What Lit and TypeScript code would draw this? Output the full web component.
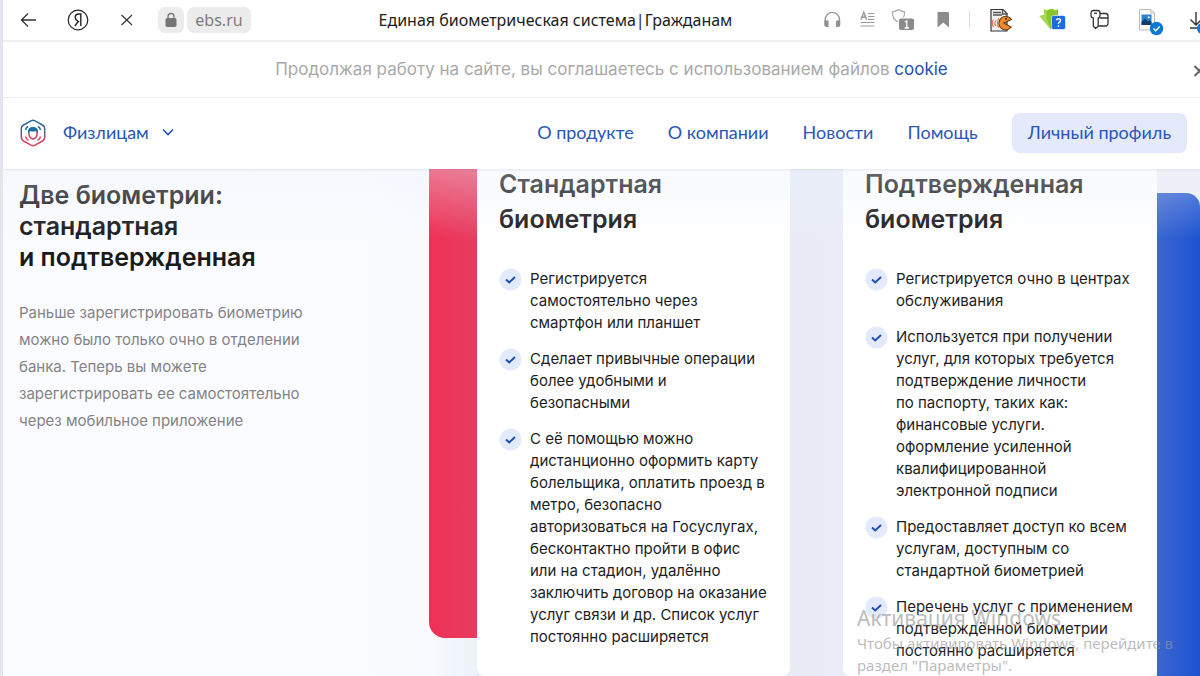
import { LitElement, html, css, nothing } from "lit";
import { customElement, property } from "lit/decorators.js";

const standardItems: string[][] = [
  ["Регистрируется", "самостоятельно через", "смартфон или планшет"],
  ["Сделает привычные операции", "более удобными и", "безопасными"],
  [
    "С её помощью можно",
    "дистанционно оформить карту",
    "болельщика, оплатить проезд в",
    "метро, безопасно",
    "авторизоваться на Госуслугах,",
    "бесконтактно пройти в офис",
    "или на стадион, удалённо",
    "заключить договор на оказание",
    "услуг связи и др. Список услуг",
    "постоянно расширяется",
  ],
];

const confirmedItems: string[][] = [
  ["Регистрируется очно в центрах", "обслуживания"],
  [
    "Используется при получении",
    "услуг, для которых требуется",
    "подтверждение личности",
    "по паспорту, таких как:",
    "финансовые услуги.",
    "оформление усиленной",
    "квалифицированной",
    "электронной подписи",
  ],
  ["Предоставляет доступ ко всем", "услугам, доступным со", "стандартной биометрией"],
  ["Перечень услуг с применением", "подтверждённой биометрии", "постоянно расширяется"],
];

const lines = (rows: string[]) => rows.map((row, i) => html`${i ? html`<br />` : nothing}${row}`);

@customElement("browser-bar")
class BrowserBar extends LitElement {
  static styles = css`
    :host {
      display: flex;
      align-items: center;
      height: 42px;
      box-sizing: border-box;
      border-bottom: 2px solid #f0f0f0;
      background: #fff;
      font-family: "Noto Sans", "Open Sans", sans-serif;
    }
    button {
      border: 0;
      padding: 0;
      margin: 0;
      background: none;
      font: inherit;
      display: flex;
    }
    svg {
      display: block;
    }
    .group {
      display: flex;
      align-items: center;
      flex: none;
    }
    .address {
      display: flex;
      gap: 3px;
      margin-left: 3px;
    }
    .chip {
      height: 26px;
      border-radius: 7px;
      background: #ececec;
      align-items: center;
      justify-content: center;
    }
    .lock {
      width: 26px;
    }
    .host {
      width: 64px;
      font-size: 16px;
      color: #7c7c7c;
    }
    .title {
      flex: 1;
      min-width: 0;
      padding-left: 46px;
      text-align: center;
      white-space: nowrap;
      overflow: hidden;
      font-size: 16px;
      line-height: 24px;
      color: #1c1c1c;
    }
  `;

  render() {
    return html`
      <div class="group">
        <button aria-label="Назад">
          <svg width="51" height="40" viewBox="0 0 51 40" fill="none" stroke="#333" stroke-width="1.300">
            <path d="M33 20H18.500M25 13.500L18.500 20l6.500 6.500" />
          </svg>
        </button>
        <button aria-label="Яндекс">
          <svg width="49" height="40" viewBox="0 0 49 40" fill="none" stroke="#222">
            <circle cx="24" cy="20" r="9.800" stroke-width="1.200" />
            <path d="M26.800 26V14h-2c-2.300 0-3.600 1.300-3.600 3.200 0 1.800.9 2.700 2.500 3.800l1.500 1M24.200 21.300L20.900 26" stroke-width="1.400" />
          </svg>
        </button>
        <button aria-label="Остановить">
          <svg width="52" height="40" viewBox="0 0 52 40" fill="none" stroke="#333" stroke-width="1.200">
            <path d="M18.500 15l10.500 10M29 15L18.500 25" />
          </svg>
        </button>
        <div class="address">
          <button class="chip lock" aria-label="Защищённое соединение">
            <svg width="14" height="16" viewBox="0 0 14 16">
              <path d="M4 7V4.500a3 3 0 0 1 6 0V7" fill="none" stroke="#7a7a7a" stroke-width="1.300" />
              <rect x="1.500" y="6" width="11" height="9" rx="1.800" fill="#757575" />
            </svg>
          </button>
          <button class="chip host">ebs.ru</button>
        </div>
      </div>
      <div class="title">Единая биометрическая система|Гражданам</div>
      <div class="group">
        <button aria-label="Слушать">
          <svg width="36" height="40" viewBox="0 0 36 40">
            <path d="M11.200 22v-2.500a7.100 7.100 0 0 1 14.200 0V22" fill="none" stroke="#999" stroke-width="1.300" />
            <path d="M10.300 20.500h4.200v6.500h-1.700a2.500 2.500 0 0 1-2.500-2.500zM22.100 20.500h4.200v4a2.500 2.500 0 0 1-2.500 2.500h-1.700z" fill="#8f8f8f" />
          </svg>
        </button>
        <button aria-label="Режим чтения">
          <svg width="36" height="40" viewBox="0 0 36 40" fill="none" stroke="#999">
            <path d="M11 19.500l2.800-7 2.800 7M12 17.300h3.600" stroke-width="1.500" />
            <path d="M18 13.500h6.500M18 16.500h6.500M18 19.500h6.500M10.500 22.500h14M10.500 26h14" stroke-width="1.200" />
          </svg>
        </button>
        <button aria-label="Защита: 1">
          <svg width="36" height="40" viewBox="0 0 36 40">
            <path d="M12.500 9.500c2 1.700 4 2 6 2.300.3 4-.8 8.200-6 10.500-5.200-2.300-6.300-6.500-6-10.500 2-.3 4-.6 6-2.300z" fill="#fff" stroke="#aaa" stroke-width="1.200" />
            <rect x="12.500" y="18" width="16" height="12.500" rx="2.500" fill="#8a8a8a" stroke="#fff" />
            <path d="M18.800 22l2-1.200V28M18.600 28h4.400" fill="none" stroke="#fff" stroke-width="1.300" />
          </svg>
        </button>
        <button aria-label="Закладка">
          <svg width="36" height="40" viewBox="0 0 36 40">
            <path d="M15.500 12h10.500a1 1 0 0 1 1 1v14.500l-5.700-5-5.800 5z" fill="#8c8c8c" />
          </svg>
        </button>
        <svg width="20" height="40" viewBox="0 0 20 40"><path d="M11.500 11v17" stroke="#ddd" /></svg>
        <button aria-label="Расширение озвучивания">
          <svg width="49" height="40" viewBox="0 0 49 40">
            <path d="M13 9.500h12l4 4V31H13z" fill="#f3f3f3" stroke="#333" stroke-width="1.200" />
            <path d="M15 12.500h8M15 15h9M24.500 10v4h5" stroke="#555" stroke-width="1.400" fill="none" />
            <path d="M15.500 19.500c-1.500 2-1.500 5 0 7.500M18 20.500c-1.200 1.500-1.200 4 0 5.500M21 18c-2 2.500-2 7 0 10" stroke="#f0704c" stroke-width="1.200" fill="none" />
            <path d="M33.200 19a6.800 6.800 0 1 0 .6 7.500l-7.800-3.300z" fill="#ef8a2b" stroke="#5c3514" stroke-width="1" transform="rotate(6 28 22)" />
            <circle cx="28" cy="18.800" r="1" fill="#3a2414" />
          </svg>
        </button>
        <button aria-label="Расширение загрузки">
          <svg width="49" height="40" viewBox="0 0 49 40">
            <path d="M17 9l3.500 1.500 2-1.500h4l1.500 1.500L31 9v7h4L24 29.500 12.500 16l5-1z" fill="#8ac52c" />
            <path d="M17 9l2.500 1.500v8L24 29.500 12.500 16l5-1z" fill="#a8d85a" />
            <rect x="24.500" y="15.500" width="14" height="14" rx="2" fill="#1d6be0" stroke="#fff" stroke-width=".6" />
            <path d="M29.500 20.300c.2-2 4-2 4 .2 0 1.600-2 1.500-2 3.300M31.500 25.300v1.600" fill="none" stroke="#fff" stroke-width="1.500" />
          </svg>
        </button>
        <button aria-label="Пароли">
          <svg width="49" height="40" viewBox="0 0 49 40" fill="none" stroke="#333" stroke-width="1.300">
            <path d="M17 10.500h4.500a2.500 2.500 0 0 1 2.500 2.500v2.500a2.500 2.500 0 0 1-1.800 2.400v8.300l-2.600 2.300-2.300-2.300v-8.300a2.500 2.500 0 0 1-2.300-2.400V13a2.500 2.500 0 0 1 2-2.500z" stroke-linejoin="round" />
            <path d="M18 13.200h3" />
            <path d="M24 13.500h5.500a2.500 2.500 0 0 1 2.500 2.500v7.500a2.500 2.500 0 0 1-2.500 2.500h-7M23.500 18H32" />
          </svg>
        </button>
        <button aria-label="Изображения">
          <svg width="49" height="40" viewBox="0 0 49 40">
            <path d="M14.500 9.500H26l3.500 3.500v17h-15z" fill="#fbfbfb" stroke="#bbb" />
            <path d="M26 9.500V13h3.500" fill="none" stroke="#bbb" />
            <rect x="16.500" y="14.500" width="10" height="10.500" fill="#2d83c9" />
            <path d="M16.500 25v-3l3.500-3.500 3 3 1.500-1.500 2 2V25z" fill="#123c6b" />
            <circle cx="23.800" cy="17.300" r="1" fill="#fff" />
            <circle cx="31.500" cy="28.500" r="6.700" fill="#0b78d4" />
            <path d="M28.500 28.500l2.200 2.200 4-4.200" stroke="#fff" stroke-width="1.500" fill="none" />
          </svg>
        </button>
        <button aria-label="Загрузки">
          <svg width="26" height="40" viewBox="0 0 26 40">
            <path d="M22 12v13M16.500 19.500l5.500 5.500 5.500-5.500M16 28H26" fill="none" stroke="#333" stroke-width="1.400" />
            <circle cx="28.500" cy="28.500" r="5.500" fill="#0b78d4" />
          </svg>
        </button>
      </div>
    `;
  }
}

@customElement("cookie-notice")
class CookieNotice extends LitElement {
  static styles = css`
    :host {
      display: flex;
      height: 56px;
      box-sizing: border-box;
      padding: 0 0 2px 28px;
      align-items: center;
      border-bottom: 1px solid #eeeef2;
      background: #fff;
      font-family: Inter, "Open Sans", sans-serif;
      font-size: 17px;
      line-height: 24px;
      color: #a9a9a9;
    }
    p {
      flex: 1;
      margin: 0;
      text-align: center;
      white-space: nowrap;
    }
    a {
      color: #2450b0;
      text-decoration: none;
    }
    button {
      flex: none;
      border: 0;
      padding: 4px 0 0;
      background: none;
    }
    svg {
      display: block;
    }
  `;
  render() {
    return html`
      <p>Продолжая работу на сайте, вы соглашаетесь с использованием файлов <a href="#cookie">cookie</a></p>
      <button aria-label="Закрыть">
        <svg width="8" height="14" viewBox="0 0 8 14" fill="none" stroke="#666" stroke-width="2">
          <path d="M2.500 2l5 5-5 5M7 7l5-5M7 7l5 5" />
        </svg>
      </button>
    `;
  }
}

@customElement("site-header")
class SiteHeader extends LitElement {
  static styles = css`
    :host {
      display: flex;
      align-items: center;
      justify-content: space-between;
      height: 71px;
      box-sizing: border-box;
      padding: 0 13px 2px 17px;
      background: #fff;
      box-shadow: 0 1px 2px rgba(60, 80, 150, 0.1);
      font-family: Lato, "Open Sans", sans-serif;
      font-size: 18px;
      line-height: 22px;
    }
    .brand,
    nav {
      display: flex;
      align-items: center;
    }
    .brand {
      gap: 17px;
    }
    nav {
      gap: 34px;
    }
    a {
      color: #2a56b8;
      text-decoration: none;
      white-space: nowrap;
    }
    nav a {
      padding-bottom: 2px;
    }
    button {
      display: flex;
      align-items: center;
      gap: 13px;
      border: 0;
      padding: 0 0 2px;
      background: none;
      font: inherit;
      color: #2a56b8;
      white-space: nowrap;
    }
    .profile {
      padding: 8px 16px 10px;
      border-radius: 8px;
      background: #e4eafc;
    }
    svg {
      display: block;
    }
  `;
  render() {
    return html`
      <div class="brand">
        <a href="#home" aria-label="Единая биометрическая система">
          <svg width="26" height="28" viewBox="0 0 26 28" fill="none">
            <defs>
              <linearGradient id="edge" x1="0" y1="0" x2="0" y2="1">
                <stop offset="0" stop-color="#1d6f9f" />
                <stop offset=".5" stop-color="#5b5a86" />
                <stop offset=".75" stop-color="#d6405c" />
                <stop offset="1" stop-color="#d6405c" />
              </linearGradient>
            </defs>
            <path d="M11 1.800Q13 .8 15 1.800L22.500 6Q24.700 7.300 24.700 9.500v9q0 2.200-2.200 3.500L15 26.200q-2 1-4 0L3.500 22Q1.300 20.700 1.300 18.500v-9Q1.300 7.300 3.500 6z" stroke="url(#edge)" stroke-width="1.500" />
            <path d="M9 12v3.500c0 2.300 2 4.500 4 4.500s4-2.200 4-4.500V12" stroke="#c9405f" stroke-width="1.500" />
            <path d="M8 14.500c-.6-4.500 1.500-6.500 5-6.500s5.600 2 5 6.500l-1.700-2.500c-2 .7-4.600.7-6.600 0z" fill="#1c6ea3" />
            <path d="M5.500 11q.5-2.500 2.500-3.500M20.500 11q-.5-2.500-2.500-3.500" stroke="#1d6f9f" stroke-width="1.400" />
            <path d="M5.500 17.500q.5 2.500 3 4M20.500 17.500q-.5 2.500-3 4" stroke="#d6405c" stroke-width="1.400" />
          </svg>
        </a>
        <button>
          Физлицам
          <svg width="12" height="8" viewBox="0 0 12 8" fill="none" stroke="#2a56b8" stroke-width="1.700">
            <path d="M1 1.500l5 5 5-5" />
          </svg>
        </button>
      </div>
      <nav>
        <a href="#product">О продукте</a>
        <a href="#company">О компании</a>
        <a href="#news">Новости</a>
        <a href="#help">Помощь</a>
        <button class="profile">Личный профиль</button>
      </nav>
    `;
  }
}

@customElement("biometry-card")
class BiometryCard extends LitElement {
  @property({ attribute: false }) heading: string[] = [];
  @property({ attribute: false }) items: string[][] = [];

  static styles = css`
    :host {
      display: block;
      box-sizing: border-box;
      padding: 0 22px 12px;
      border-radius: 0 0 8px 8px;
      background: #fff;
      white-space: nowrap;
    }
    h2 {
      margin: 0 0 31px;
      font-size: 25px;
      line-height: 35px;
      font-weight: 600;
      color: #1a1a1b;
    }
    ul {
      display: grid;
      gap: 14px;
      margin: 0;
      padding: 0;
      list-style: none;
    }
    li {
      display: flex;
      gap: 8px;
      font-size: 15px;
      line-height: 22px;
      color: #1d1d1f;
    }
    .tick {
      flex: none;
      display: block;
    }
  `;
  render() {
    return html`
      <h2>${lines(this.heading)}</h2>
      <ul>
        ${this.items.map(
          (item) => html`<li>
            <svg class="tick" width="23" height="23" viewBox="0 0 23 23">
              <circle cx="11.500" cy="11.500" r="11" fill="#e3eafb" />
              <path d="M7 11.500l3.200 3L16 9" fill="none" stroke="#1f4fb5" stroke-width="2" />
            </svg>
            <span>${lines(item)}</span>
          </li>`
        )}
      </ul>
    `;
  }
}

@customElement("app-root")
class AppRoot extends LitElement {
  static styles = css`
    :host {
      display: flex;
      flex-direction: column;
      position: relative;
      min-height: 100vh;
      box-sizing: border-box;
      overflow: hidden;
      border-left: 3px solid #e3e4ee;
      background: #fff;
      font-family: Inter, "Open Sans", sans-serif;
    }
    site-header {
      position: relative;
      z-index: 1;
    }
    main {
      flex: 1;
      display: grid;
      grid-template-columns: minmax(0, 426fr) 48px minmax(0, 313fr) 53px minmax(0, 314fr) 43px;
      position: relative;
      margin-top: -2px;
      background: linear-gradient(90deg, #e9ecf7 68%, #eef0f7);
    }
    main::after {
      content: "";
      position: absolute;
      inset: 0 0 auto;
      height: 72px;
      background: linear-gradient(rgba(236, 241, 251, 0.38), rgba(245, 247, 253, 0));
      pointer-events: none;
    }
    .intro {
      padding: 13px 16px 0;
      background: linear-gradient(90deg, #fbfcff 85%, #f8faff);
      white-space: nowrap;
    }
    h1 {
      margin: 0 0 26px;
      font-size: 25px;
      line-height: 31px;
      font-weight: 600;
      color: #1a1a1b;
    }
    .intro p {
      margin: 0;
      font-size: 15px;
      line-height: 27px;
      color: #838388;
    }
    .red {
      background: linear-gradient(90deg, #f8faff, #edf1f9);
      padding-bottom: 38px;
      display: grid;
    }
    .red div {
      border-radius: 0 0 0 16px;
      background: linear-gradient(90deg, #ef3054, #e63d60);
    }
    .blue {
      display: grid;
      padding-top: 26px;
    }
    .blue div {
      border-radius: 0 14px 0 0;
      background: linear-gradient(90deg, #3c66d0, #1c53d2);
    }
    .notice {
      position: absolute;
      z-index: 2;
      left: 854px;
      top: 604px;
      font-family: "Noto Sans", "Open Sans", sans-serif;
      white-space: nowrap;
      color: rgba(150, 150, 150, 0.65);
      pointer-events: none;
    }
    .notice p {
      margin: 0;
      font-size: 15px;
      line-height: 22px;
    }
    .notice .lead {
      font-size: 21px;
      line-height: 28px;
    }
  `;

  render() {
    return html`
      <browser-bar></browser-bar>
      <cookie-notice></cookie-notice>
      <site-header></site-header>
      <main>
        <section class="intro">
          <h1>${lines(["Две биометрии:", "стандартная", "и подтвержденная"])}</h1>
          <p>
            ${lines([
              "Раньше зарегистрировать биометрию",
              "можно было только очно в отделении",
              "банка. Теперь вы можете",
              "зарегистрировать ее самостоятельно",
              "через мобильное приложение",
            ])}
          </p>
        </section>
        <div class="red"><div></div></div>
        <biometry-card .heading=${["Стандартная", "биометрия"]} .items=${standardItems}></biometry-card>
        <div></div>
        <biometry-card .heading=${["Подтвержденная", "биометрия"]} .items=${confirmedItems}></biometry-card>
        <div class="blue"><div></div></div>
      </main>
      <div class="notice">
        <p class="lead">Активация Windows</p>
        <p>Чтобы активировать Windows, перейдите в<br />раздел "Параметры".</p>
      </div>
    `;
  }
}
